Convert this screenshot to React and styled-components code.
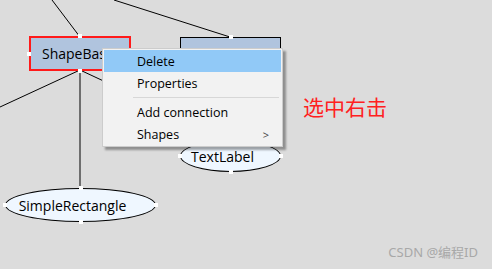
import React from 'react';
import styled, { createGlobalStyle } from 'styled-components';

const GlobalStyle = createGlobalStyle`
  html, body {
    margin: 0;
    padding: 0;
    background: #dcdcdc;
  }
  body {
    font-family: "Open Sans", "Noto Sans CJK SC", sans-serif;
  }
`;

const Canvas = styled.div`
  position: relative;
  width: 492px;
  height: 269px;
  overflow: hidden;
  background: #dcdcdc;
`;

const Edges = styled.svg`
  position: absolute;
  left: 0;
  top: 0;
`;

const Node = styled.div`
  position: absolute;
  box-sizing: border-box;
  display: flex;
  align-items: center;
  justify-content: ${(p) => (p.$ellipse ? 'center' : 'flex-start')};
  padding: ${(p) => (p.$ellipse ? '0 16px 0 0' : '0 0 0 11px')};
  font-size: 14px;
  color: #000;
  background: ${(p) => (p.$ellipse ? '#eff7ff' : '#b0c4de')};
  border: ${(p) => (p.$selected ? '2px solid #ff1a1a' : '1px solid #000')};
  border-radius: ${(p) => (p.$ellipse ? '50%' : '0')};
`;

const Handle = styled.span`
  position: absolute;
  width: 4px;
  height: 4px;
  background: #fff;
  transform: translate(-50%, -50%);
`;

const Menu = styled.div`
  position: absolute;
  left: 102px;
  top: 48px;
  width: 181px;
  box-sizing: border-box;
  padding: 1px;
  background: #f2f2f2;
  border: 1px solid #cccccc;
  box-shadow: 3px 3px 2px rgba(0, 0, 0, 0.35);
  font-size: 12.5px;
`;

const MenuItem = styled.div`
  display: flex;
  align-items: center;
  justify-content: space-between;
  height: 22px;
  padding: 0 12px 0 33px;
  color: #000;
  background: ${(p) => (p.$active ? '#91c9f7' : 'transparent')};
`;

const Separator = styled.div`
  height: 1px;
  margin: 3px 2px 3px 29px;
  background: #d7d7d7;
`;

const Chevron = styled.span`
  font-size: 11px;
  color: #444;
`;

const Note = styled.div`
  position: absolute;
  left: 303px;
  top: 91px;
  font-family: "Noto Sans CJK SC", sans-serif;
  font-size: 21px;
  color: #ff2020;
`;

const Watermark = styled.div`
  position: absolute;
  right: 14px;
  bottom: 8px;
  font-family: "Noto Sans", "Noto Sans CJK SC", sans-serif;
  font-size: 13px;
  color: #a8a8a8;
`;

const nodes = [
  { id: 'base', label: 'ShapeBase', x: 29, y: 36, w: 102, h: 35, selected: true },
  { id: 'other', label: '', x: 180, y: 37, w: 101, h: 35 },
  { id: 'text', label: 'TextLabel', x: 180, y: 140, w: 101, h: 32, ellipse: true },
  { id: 'simple', label: 'SimpleRectangle', x: 5, y: 188, w: 151, h: 34, ellipse: true },
];

const edges = [
  [52, 0, 80, 37],
  [114, 0, 230, 37],
  [80, 70, 0, 107],
  [80, 70, 230, 140],
  [80, 70, 80, 188],
];

const handles = (n) => [
  [n.w / 2, 0],
  [0, n.h / 2],
  [n.w, n.h / 2],
  [n.w / 2, n.h],
];

const App = () => {
  return (
    <Canvas>
      <GlobalStyle />
      <Edges width="492" height="269">
        {edges.map(([x1, y1, x2, y2], i) => (
          <line key={i} x1={x1} y1={y1} x2={x2} y2={y2} stroke="#000" strokeWidth="1" />
        ))}
      </Edges>
      {nodes.map((n) => (
        <Node
          key={n.id}
          $ellipse={n.ellipse}
          $selected={n.selected}
          style={{ left: n.x, top: n.y, width: n.w, height: n.h }}
        >
          {n.label}
          {handles(n).map(([hx, hy], i) => (
            <Handle key={i} style={{ left: hx - (n.selected ? 2 : 1), top: hy - (n.selected ? 2 : 1) }} />
          ))}
        </Node>
      ))}
      <Menu>
        <MenuItem $active>Delete</MenuItem>
        <MenuItem>Properties</MenuItem>
        <Separator />
        <MenuItem>Add connection</MenuItem>
        <MenuItem>
          Shapes
          <Chevron>&gt;</Chevron>
        </MenuItem>
      </Menu>
      <Note>选中右击</Note>
      <Watermark>CSDN @编程ID</Watermark>
    </Canvas>
  );
};

export default App;
